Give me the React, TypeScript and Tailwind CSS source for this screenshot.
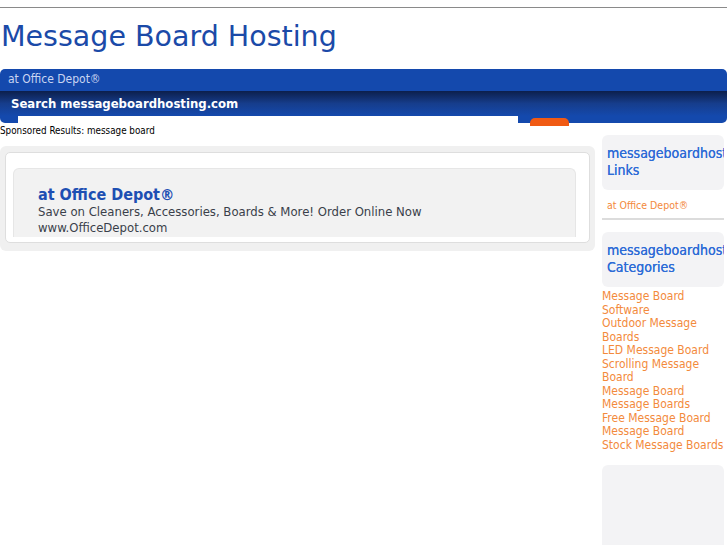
import type { ReactNode } from 'react'

const links = [
  'Message Board Software',
  'Outdoor Message Boards',
  'LED Message Board',
  'Scrolling Message Board',
  'Message Board',
  'Message Boards',
  'Free Message Board',
  'Message Board',
  'Stock Message Boards',
]

function SideBox({ children }: { children: ReactNode }) {
  return (
    <div className="h-[55px] overflow-hidden rounded-[6px] bg-[#f3f3f5] px-[5px] pt-[10px]">
      <div className="whitespace-nowrap text-[14px] leading-[17px] text-[#2d6bd6] [text-shadow:0_0_0.3px_#2d6bd6]">
        {children}
      </div>
    </div>
  )
}

export default function App() {
  return (
    <div className="h-[545px] w-[727px] overflow-hidden bg-white font-['DejaVu_Sans_Condensed','DejaVu_Sans',sans-serif]">
      <div className="pt-[7px]">
        <div className="h-px bg-[#8a8a8a]" />
      </div>

      <h1 className="mt-[11px] pl-[1px] font-['DejaVu_Sans',sans-serif] text-[28.5px] leading-[35px] text-[#1b4aa8]">
        Message Board Hosting
      </h1>

      <div className="mt-[15px]">
        <div className="h-[22px] rounded-t-[5px] bg-[#1449ad] pl-[8px] text-[12px] leading-[20px] text-[#c9d5f2]">
          at Office Depot®
        </div>
        <div className="h-[25px] bg-gradient-to-b from-[#0c1f4c] via-[#163d8c] to-[#1449ad] pl-[11px] text-[13px] font-bold leading-[26px] text-white">
          Search messageboardhosting.com
        </div>
        <div className="flex h-[7px]">
          <div className="w-[18px] rounded-bl-[5px] bg-[#1449ad]" />
          <div className="w-[500px] bg-white" />
          <div className="relative flex-1 rounded-br-[5px] bg-[#1449ad]">
            <div className="absolute left-[12px] top-[2px] h-[8px] w-[39px] rounded-t-[5px] bg-[#f05a14]" />
          </div>
        </div>
      </div>

      <div className="h-[12px] pt-[3px] text-[9.8px] leading-[10px] text-black">
        Sponsored Results: message board
      </div>

      <div className="flex items-start">
        <div className="mt-[11px] w-[595px] rounded-[6px] bg-[#f0f0f0] px-[5px] pb-[8px] pt-[6px]">
          <div className="rounded-[5px] border border-[#dedede] bg-white pb-[5px] pl-[7px] pr-[13px] pt-[15px]">
            <div className="h-[69px] rounded-t-[6px] border-x border-t border-[#e6e6e6] bg-[#f2f2f2] pl-[24px] pt-[17px]">
              <div className="text-[16px] font-bold leading-[18px] text-[#1d4fb3]">
                at Office Depot®
              </div>
              <div className="text-[13px] leading-[16px] text-[#3a3f4a]">
                Save on Cleaners, Accessories, Boards &amp; More! Order Online Now
              </div>
              <div className="text-[13px] leading-[16px] text-[#3a3f4a]">
                www.OfficeDepot.com
              </div>
            </div>
          </div>
        </div>

        <div className="ml-[7px] w-[122px]">
          <SideBox>
            messageboardhosting.com
            <br />
            Links
          </SideBox>
          <div className="pl-[5px] pt-[9px] text-[10.5px] leading-[13px] text-[#f38a3c]">
            at Office Depot®
          </div>
          <div className="mt-[6px] h-[2px] bg-[#dcdcdc]" />
          <div className="mt-[12px]">
            <SideBox>
              messageboardhosting.com
              <br />
              Categories
            </SideBox>
          </div>
          <ul className="mt-[3px] text-[12px] leading-[13.5px] text-[#f38a3c]">
            {links.map((l, i) => (
              <li key={i}>{l}</li>
            ))}
          </ul>
          <div className="mt-[13px] h-[100px] rounded-[6px] bg-[#f3f3f5]" />
        </div>
      </div>
    </div>
  )
}
